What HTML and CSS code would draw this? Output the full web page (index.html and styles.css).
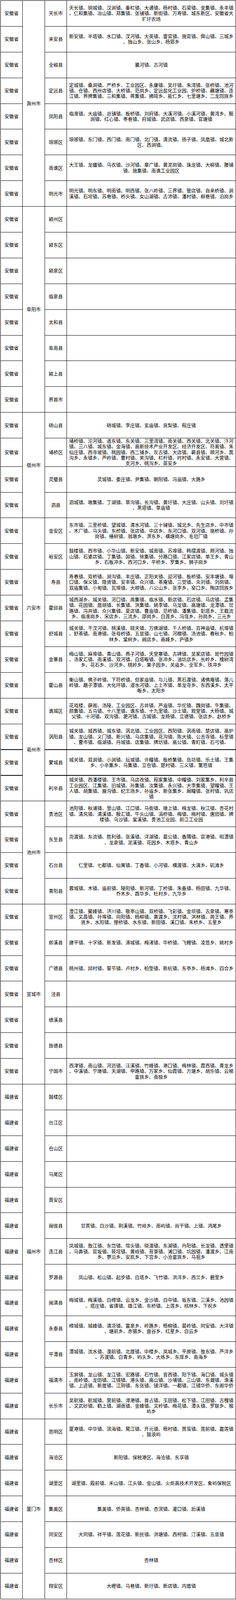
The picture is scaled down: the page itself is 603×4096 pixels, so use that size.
FILE: index.html
```html
<!DOCTYPE html>
<html lang="zh-CN">
<head>
<meta charset="utf-8">
<title>乡镇列表</title>
<link rel="stylesheet" href="styles.css">
</head>
<body>
<table class="regions">
<colgroup><col class="c-prov"><col class="c-city"><col class="c-county"><col class="c-towns"></colgroup>
<tbody>
<tr><td class="prov">安徽省</td><td class="city" rowspan="8">滁州市</td><td class="county">天长市</td><td class="towns">天长镇、铜城镇、汉涧镇、秦栏镇、大通镇、杨村镇、石梁镇、金集镇、永丰镇、仁和集镇、冶山镇、郑集镇、张铺镇、新街镇、万寿镇、城东新区、安徽省大圹圩农场</td></tr>
<tr><td class="prov">安徽省</td><td class="county">来安县</td><td class="towns">新安镇、半塔镇、水口镇、汊河镇、大英镇、雷官镇、施官镇、舜山镇、三城乡、独山乡、张山乡、杨郢乡</td></tr>
<tr><td class="prov">安徽省</td><td class="county">全椒县</td><td class="towns">襄河镇、古河镇</td></tr>
<tr><td class="prov">安徽省</td><td class="county">定远县</td><td class="towns">定城镇、桑涧镇、严桥乡、工业园区、永康镇、吴圩镇、朱湾镇、张桥镇、池河镇、仓镇、西卅店镇、大桥镇、范岗乡、定远盐化工业园、炉桥镇、藕塘镇、连江镇、界牌集镇、三和集镇、蒋集镇、拂晓乡、能仁乡、七里塘乡、二龙回族乡</td></tr>
<tr><td class="prov">安徽省</td><td class="county">凤阳县</td><td class="towns">临淮镇、大庙镇、总铺镇、板桥镇、刘府镇、大溪河镇、小溪河镇、黄湾乡、殷涧镇、红心镇、枣巷镇、府城镇、武店镇、西泉镇、官塘镇</td></tr>
<tr><td class="prov">安徽省</td><td class="county">琅琊区</td><td class="towns">琅琊镇、东门镇、西门镇、南门镇、北门镇、清流镇、扬子镇、凤凰镇、城北新区、西涧镇、</td></tr>
<tr><td class="prov">安徽省</td><td class="county">南谯区</td><td class="towns">大王镇、龙蟠镇、乌衣镇、沙河镇、章广镇、黄泥岗镇、珠龙镇、大柳镇、腰铺镇、施集镇、南谯工业园区</td></tr>
<tr><td class="prov">安徽省</td><td class="county">明光市</td><td class="towns">明光镇、明东镇、明南镇、明西镇、张八岭镇、三界镇、管店镇、自来桥镇、涧溪镇、石坝镇、苏巷镇、桥头镇、女山湖镇、古沛镇、潘村镇、柳巷镇、泊岗乡</td></tr>

<tr><td class="prov">安徽省</td><td class="city" rowspan="8">阜阳市</td><td class="county">颍州区</td><td class="towns"></td></tr>
<tr><td class="prov">安徽省</td><td class="county">颍东区</td><td class="towns"></td></tr>
<tr><td class="prov">安徽省</td><td class="county">颍泉区</td><td class="towns"></td></tr>
<tr><td class="prov">安徽省</td><td class="county">临泉县</td><td class="towns"></td></tr>
<tr><td class="prov">安徽省</td><td class="county">太和县</td><td class="towns"></td></tr>
<tr><td class="prov">安徽省</td><td class="county">阜南县</td><td class="towns"></td></tr>
<tr><td class="prov">安徽省</td><td class="county">颍上县</td><td class="towns"></td></tr>
<tr><td class="prov">安徽省</td><td class="county">界首市</td><td class="towns"></td></tr>

<tr><td class="prov">安徽省</td><td class="city" rowspan="4">宿州市</td><td class="county">砀山县</td><td class="towns">砀城镇、李庄镇、玄庙镇、良梨镇、程庄镇</td></tr>
<tr class="tall"><td class="prov">安徽省</td><td class="county">埇桥区</td><td class="towns">埇桥镇、沱河镇、道东镇、东关镇、三里湾镇、南关镇、西关镇、北关镇、汴河镇、三八镇、城东镇、金海镇、高新技术产业开发区、经济开发区、符离镇、朱仙庄镇、西寺坡镇、桃园镇、西二铺乡、灰古镇、大店镇、蕲县镇、顺河乡、蒿沟乡、永镇乡、芦岭镇、曹村镇、夹沟镇、栏杆镇、时村镇、永安镇、大营镇、支河乡、桃沟乡、苗安乡</td></tr>
<tr><td class="prov">安徽省</td><td class="county">灵璧县</td><td class="towns">灵城镇、娄庄镇、尹集镇、朝阳镇、冯庙镇、大路乡</td></tr>
<tr><td class="prov">安徽省</td><td class="county">泗县</td><td class="towns">泗城镇、墩集镇、丁湖镇、草沟镇、长沟镇、黄圩镇、大庄镇、山头镇、刘圩镇、黑塔镇、草庙镇</td></tr>

<tr><td class="prov">安徽省</td><td class="city" rowspan="7">六安市</td><td class="county">金安区</td><td class="towns">东市镇、三里桥镇、望城镇、清水河镇、三十铺镇、城北乡、先生店乡、中市镇、木厂镇、马头镇、东桥镇、张店镇、中店乡、东河口镇、双河镇、施桥镇、孙岗镇、椿树镇、翁墩乡、淠东乡、横塘岗乡、毛坦厂镇</td></tr>
<tr><td class="prov">安徽省</td><td class="county">裕安区</td><td class="towns">鼓楼镇、西市镇、小华山镇、新安镇、城南镇、苏埠镇、韩摆渡镇、顺河镇、独山镇、石婆店镇、丁集镇、固镇、徐集镇、分路口镇、江家店镇、单王乡、青山乡、石板冲乡、西河口乡、平桥乡、罗集乡、狮子岗乡</td></tr>
<tr><td class="prov">安徽省</td><td class="county">寿县</td><td class="towns">寿春镇、双桥镇、涧沟镇、丰庄镇、正阳关镇、迎河镇、板桥镇、安丰塘镇、堰口镇、保义镇、隐贤镇、安丰镇、众兴镇、茶庵镇、三觉镇、炎刘镇、刘岗镇、双庙集镇、小甸镇、瓦埠镇、大顺镇、八公山乡、张李乡、窑口乡、陶店回族乡</td></tr>
<tr><td class="prov">安徽省</td><td class="county">霍邱县</td><td class="towns">城西湖乡、城关镇、河口镇、周集镇、临水镇、新店镇、石店镇、马店镇、孟集镇、花园镇、扈胡镇、长集镇、洪集镇、姚李镇、乌龙镇、高塘镇、龙潭镇、岔路镇、冯井镇、众兴集镇、夏店镇、曹庙镇、范桥镇、潘集镇、彭塔乡、王截流乡、临淮岗乡、宋店乡、三流乡、邵岗乡、白莲乡、冯瓴乡、孙岗乡、三元乡</td></tr>
<tr><td class="prov">安徽省</td><td class="county">舒城县</td><td class="towns">城关镇、干汊河镇、桃溪镇、晓天镇、万佛湖镇、千人桥镇、百神庙镇、杭埠镇、舒茶镇、南港镇、张母桥镇、五显镇、山七镇、河棚镇、汤池镇、春秋乡、柏林乡、棠树乡、阙店乡、高峰乡、庐镇乡</td></tr>
<tr><td class="prov">安徽省</td><td class="county">金寨县</td><td class="towns">梅山镇、麻埠镇、青山镇、燕子河镇、天堂寨镇、古碑镇、吴家店镇、斑竹园镇、汤家汇镇、南溪镇、双河镇、白塔畈镇、张冲乡、油坊店乡、长岭乡、槐树湾乡、花石乡、沙河乡、桃岭乡、果子园乡、关庙乡、全军乡、铁冲乡</td></tr>
<tr><td class="prov">安徽省</td><td class="county">霍山县</td><td class="towns">衡山镇、佛子岭镇、下符桥镇、但家庙镇、与儿镇、黑石渡镇、诸佛庵镇、落儿岭镇、磨子潭镇、大化坪镇、漫水河镇、上土市镇、单龙寺乡、东西溪乡、太平畈乡、太阳乡</td></tr>

<tr><td class="prov">安徽省</td><td class="city" rowspan="4">亳州市</td><td class="county">谯城区</td><td class="towns">花戏楼、薛阁、汤陵、工业园区、古井镇、芦庙镇、华佗镇、魏岗镇、牛集镇、颜集镇、五马镇、十八里镇、谯东镇、十九里镇、沙土镇、观堂镇、大杨镇、城父镇、十河镇、双沟镇、淝河镇、古城镇、龙杨镇、立德镇、张店乡、赵桥乡</td></tr>
<tr><td class="prov">安徽省</td><td class="county">涡阳县</td><td class="towns">城关镇、城西镇、城东镇、涡北镇、工业园区、西阳镇、涡南镇、楚店镇、高炉镇、龙山镇、义门镇、新兴镇、马店集镇、花沟镇、陈大镇、公吉寺镇、标里镇、曹市镇、临湖镇、丹城镇、店集镇、牌坊镇、高公镇、青町镇、石弓镇、</td></tr>
<tr class="thick"><td class="prov">安徽省</td><td class="county">蒙城县</td><td class="towns">城关镇、双涧镇、小涧镇、坛城镇、许疃镇、板桥集镇、岳坊镇、乐土镇、王集乡、小辛集乡、马集镇、立仓镇、楚村镇、三义镇、篱笆镇</td></tr>
<tr class="thick"><td class="prov">安徽省</td><td class="county">利辛县</td><td class="towns">城关镇、西潘楼镇、王市镇、马店孜镇、程家集镇、中疃镇、刘家集乡、利辛县工业园区、江集镇、旧城镇、孙集镇、汝集镇、永兴镇、大李集镇、望疃镇、王人镇、胡集镇、展沟镇、纪王场乡、孙庙乡、新张集乡、阚疃镇、张村镇、巩店镇</td></tr>

<tr><td class="prov">安徽省</td><td class="city" rowspan="4">池州市</td><td class="county">贵池区</td><td class="towns">池阳镇、秋浦镇、里山镇、江口镇、马衙镇、墩上镇、梅龙镇、秋江镇、杏花村镇、清风镇、清溪镇、殷汇镇、牛头山镇、涓桥镇、梅镇、梅村镇、唐田镇、牌楼镇、乌沙镇、棠溪镇、贵池工业园、前江工业园</td></tr>
<tr><td class="prov">安徽省</td><td class="county">东至县</td><td class="towns">尧渡镇、东流镇、胜利镇、张溪镇、洋湖镇、葛公镇、香隅镇、官港镇、昭潭镇、龙泉镇、泥溪镇、花园乡、木塔乡、青山乡</td></tr>
<tr><td class="prov">安徽省</td><td class="county">石台县</td><td class="towns">仁里镇、七都镇、仙寓镇、丁香镇、小河镇、横渡镇、大演乡、矶滩乡</td></tr>
<tr><td class="prov">安徽省</td><td class="county">青阳县</td><td class="towns">蓉城镇、木镇、庙前镇、陵阳镇、新河镇、丁桥镇、朱备镇、杨田镇、九华镇、乔木乡、酉华乡、杜村乡、九华乡</td></tr>

<tr><td class="prov">安徽省</td><td class="city" rowspan="7">宣城市</td><td class="county">宣州区</td><td class="towns">澄江镇、鳌峰镇、济川镇、敬亭山镇、双桥镇、飞彩镇、金坝镇、古泉镇、寒亭镇、文昌镇、孙埠镇、向阳镇、杨柳镇、黄渡乡、沈村镇、洪林镇、周王镇、养贤乡、水阳镇、狸桥镇、水东镇、新田镇、溪口镇、朱桥乡、五星乡</td></tr>
<tr><td class="prov">安徽省</td><td class="county">郎溪县</td><td class="towns">建平镇、十字镇、新发镇、涛城镇、梅渚镇、毕桥镇、飞鲤镇、凌笪乡、姚村乡</td></tr>
<tr><td class="prov">安徽省</td><td class="county">广德县</td><td class="towns">桃州镇、邱村镇、誓节镇、卢村乡、柏垫镇、新杭镇、东亭乡、杨滩乡、四合乡</td></tr>
<tr><td class="prov">安徽省</td><td class="county">泾县</td><td class="towns"></td></tr>
<tr><td class="prov">安徽省</td><td class="county">绩溪县</td><td class="towns"></td></tr>
<tr><td class="prov">安徽省</td><td class="county">旌德县</td><td class="towns"></td></tr>
<tr><td class="prov">安徽省</td><td class="county">宁国市</td><td class="towns">西津镇、南山镇、河沥镇、汪溪镇、竹峰镇、港口镇、梅林镇、霞西镇、青龙乡、中溪镇、宁墩镇、天湖镇、甲路镇、万家乡、仙霞镇、方塘乡、胡乐镇、云梯畲族乡、南极乡</td></tr>

<tr><td class="prov">福建省</td><td class="city" rowspan="13">福州市</td><td class="county">鼓楼区</td><td class="towns"></td></tr>
<tr><td class="prov">福建省</td><td class="county">台江区</td><td class="towns"></td></tr>
<tr><td class="prov">福建省</td><td class="county">仓山区</td><td class="towns"></td></tr>
<tr><td class="prov">福建省</td><td class="county">马尾区</td><td class="towns"></td></tr>
<tr><td class="prov">福建省</td><td class="county">晋安区</td><td class="towns"></td></tr>
<tr><td class="prov">福建省</td><td class="county">闽侯县</td><td class="towns">甘蔗镇、白沙镇、荆溪镇、竹岐乡、南屿镇、尚干镇、上镇、鸿尾乡</td></tr>
<tr><td class="prov">福建省</td><td class="county">连江县</td><td class="towns">凤城镇、敖江镇、东岱镇、琯头镇、晓澳镇、东湖镇、丹阳镇、长龙镇、透堡镇、马鼻镇、官坂镇、筱埕镇、黄岐镇、苔菉镇、浦口镇、坑园镇、潘渡乡、江南乡、蓼沿乡、安凯乡、下宫乡、小沧畲族乡、马祖乡</td></tr>
<tr><td class="prov">福建省</td><td class="county">罗源县</td><td class="towns">凤山镇、松山镇、起步镇、白塔乡、飞竹镇、洪洋乡、西兰乡、碧里乡</td></tr>
<tr><td class="prov">福建省</td><td class="county">闽清县</td><td class="towns">梅城镇、梅溪镇、白樟镇、云龙乡、金沙镇、白中镇、坂东镇、三溪乡、池园镇、塔庄镇、省璜镇、雄江镇、东桥镇、上莲乡、桔林乡、下祝乡</td></tr>
<tr><td class="prov">福建省</td><td class="county">永泰县</td><td class="towns">樟城镇、城峰镇、清凉镇、富泉乡、岭路乡、梧桐镇、葛岭镇、同安镇、大洋镇、塘前乡、赤锡乡、盘谷乡、红星乡、白云乡</td></tr>
<tr><td class="prov">福建省</td><td class="county">平潭县</td><td class="towns">潭城镇、流水镇、澳前镇、北厝镇、中楼乡、岚城乡、平原镇、敖东镇、芦洋乡、苏澳镇、白青乡、屿头乡、大练乡、东庠乡、南海乡</td></tr>
<tr><td class="prov">福建省</td><td class="county">福清市</td><td class="towns">玉屏镇、龙山镇、龙江镇、宏路镇、石竹镇、音西镇、阳下镇、海口镇、城头镇、南岭镇、龙田镇、江镜镇、港头镇、高山镇、沙埔镇、三山镇、东瀚镇、渔溪镇、上迳镇、新厝镇、江阴镇、东张镇、镜洋镇、一都镇、江镜华侨、东阁华侨</td></tr>
<tr><td class="prov">福建省</td><td class="county">长乐市</td><td class="towns">吴航镇、航城镇、营前镇、漳港镇、首占镇、玉田镇、松下镇、江田镇、古槐镇、文武砂镇、鹤上镇、湖南镇、金峰镇、文岭镇、梅花镇、潭头镇、罗联乡、猴屿乡</td></tr>

<tr><td class="prov">福建省</td><td class="city" rowspan="7">厦门市</td><td class="county">思明区</td><td class="towns">厦港镇、中华镇、滨海镇、鹭江镇、开元镇、梧村镇、筼筜镇、莲前镇、嘉莲镇、鼓浪屿</td></tr>
<tr><td class="prov">福建省</td><td class="county">海沧区</td><td class="towns">新阳镇、保税港区、海沧镇、东孚镇</td></tr>
<tr><td class="prov">福建省</td><td class="county">湖里区</td><td class="towns">湖里镇、殿前镇、禾山镇、江头镇、金山镇、火炬高技术开发区、象屿保税区</td></tr>
<tr><td class="prov">福建省</td><td class="county">集美区</td><td class="towns">集美镇、侨英镇、杏林镇、杏滨镇、灌口镇、后溪镇</td></tr>
<tr><td class="prov">福建省</td><td class="county">同安区</td><td class="towns">大同镇、祥平镇、莲花镇、新民镇、洪塘镇、西柯镇、汀溪镇、五显镇</td></tr>
<tr><td class="prov">福建省</td><td class="county">杏林区</td><td class="towns">杏林镇</td></tr>
<tr><td class="prov">福建省</td><td class="county">翔安区</td><td class="towns">大嶝镇、马巷镇、新圩镇、新店镇、内厝镇</td></tr>
</tbody>
</table>
</body>
</html>
```

FILE: styles.css
```css
html, body {
  margin: 0;
  padding: 0;
  background: #ffffff;
}

body {
  font-family: "Noto Sans CJK SC", "Noto Sans", sans-serif;
  font-size: 12px;
  color: #000000;
  text-spacing-trim: space-all;
}

.regions {
  border-collapse: collapse;
  table-layout: fixed;
  width: 601px;
  margin: 1px 0 0 1px;
}

.c-prov { width: 56px; }
.c-city { width: 57px; }
.c-county { width: 56px; }
.c-towns { width: 432px; }

.regions tr {
  height: 65.9px;
}

.regions tr.tall {
  height: 72.4px;
}

.regions td {
  border: 1px solid #000000;
  padding: 0 3px;
  text-align: center;
  vertical-align: middle;
  line-height: 14.3px;
  white-space: normal;
}

.regions tr.thick td {
  border-top: 2px solid #000000;
}

.regions td.city {
  border-top: 1px solid #000000;
}

.towns {
  line-break: anywhere;
  word-break: break-all;
}
```
